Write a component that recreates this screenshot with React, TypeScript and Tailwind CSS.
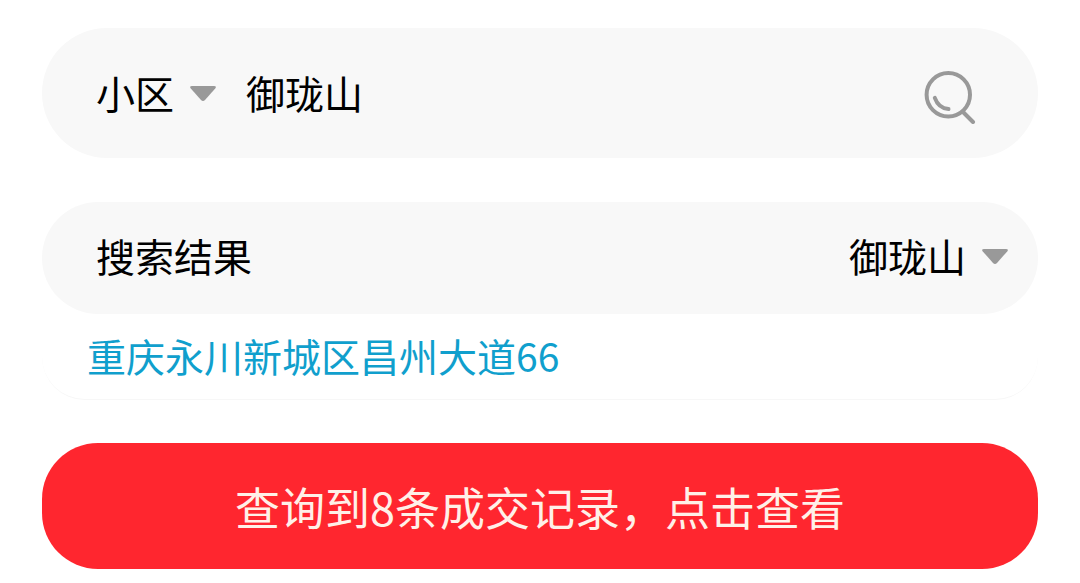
import { useState } from 'react';

function Caret() {
  return (
    <svg
      className="pointer-events-none absolute right-0 top-[22px] h-4 w-[26px]"
      viewBox="0 0 26 16"
      aria-hidden="true"
    >
      <path
        d="M2 0H24Q27 0 25.2 2.4L15 14Q13 16 11 14L.8 2.4Q-1 0 2 0Z"
        fill="#999999"
      />
    </svg>
  );
}

function Dropdown({ label, options }: { label: string; options: string[] }) {
  return (
    <div className="relative shrink-0">
      <select
        aria-label={label}
        className="block h-14 cursor-pointer appearance-none bg-transparent pr-[41px] text-black outline-none"
      >
        {options.map((option) => (
          <option key={option}>{option}</option>
        ))}
      </select>
      <Caret />
    </div>
  );
}

function SearchIcon() {
  return (
    <svg
      className="h-16 w-14"
      viewBox="0 0 56 64"
      fill="none"
      stroke="#999999"
      strokeWidth="4"
      strokeLinecap="round"
      aria-hidden="true"
    >
      <circle cx="26.3" cy="34.7" r="21.7" />
      <path d="M41 52L51 62" />
      <path d="M12.8 37.8C15 44 20 48.5 26.5 49" />
    </svg>
  );
}

export default function App() {
  const [query, setQuery] = useState('御珑山');

  return (
    <main className="bg-white px-[42px] py-7 font-['Noto_Sans_CJK_SC',sans-serif] text-[39px] leading-14 text-black">
      <form
        role="search"
        onSubmit={(event) => event.preventDefault()}
        className="flex items-center rounded-full bg-[#f8f8f8] pb-[34px] pl-[54px] pr-[60px] pt-8"
      >
        <Dropdown label="搜索类型" options={['小区']} />
        <input
          aria-label="小区名称"
          value={query}
          onChange={(event) => setQuery(event.target.value)}
          className="ml-[30px] h-14 min-w-0 flex-1 bg-transparent outline-none"
        />
        <button type="submit" aria-label="搜索" className="shrink-0 cursor-pointer">
          <SearchIcon />
        </button>
      </form>

      <section className="mt-11">
        <div className="flex items-center justify-between rounded-full bg-[#f8f8f8] pb-[31px] pl-[54px] pr-[30px] pt-[25px]">
          <h2>搜索结果</h2>
          <Dropdown label="选择小区" options={['御珑山']} />
        </div>
        <div className="rounded-[43px] border-b border-[#f7f7f7] px-[45px] pb-4 pt-[13px]">
          <a href="#address" className="text-[#109fcd]">
            重庆永川新城区昌州大道66
          </a>
        </div>
      </section>

      <button
        type="button"
        className="mt-[43px] w-full cursor-pointer rounded-[56px] bg-[#ff262f] pb-[34px] pt-9 text-[45px] leading-14 text-[#fff0e8]"
      >
        查询到8条成交记录，点击查看
      </button>
    </main>
  );
}
